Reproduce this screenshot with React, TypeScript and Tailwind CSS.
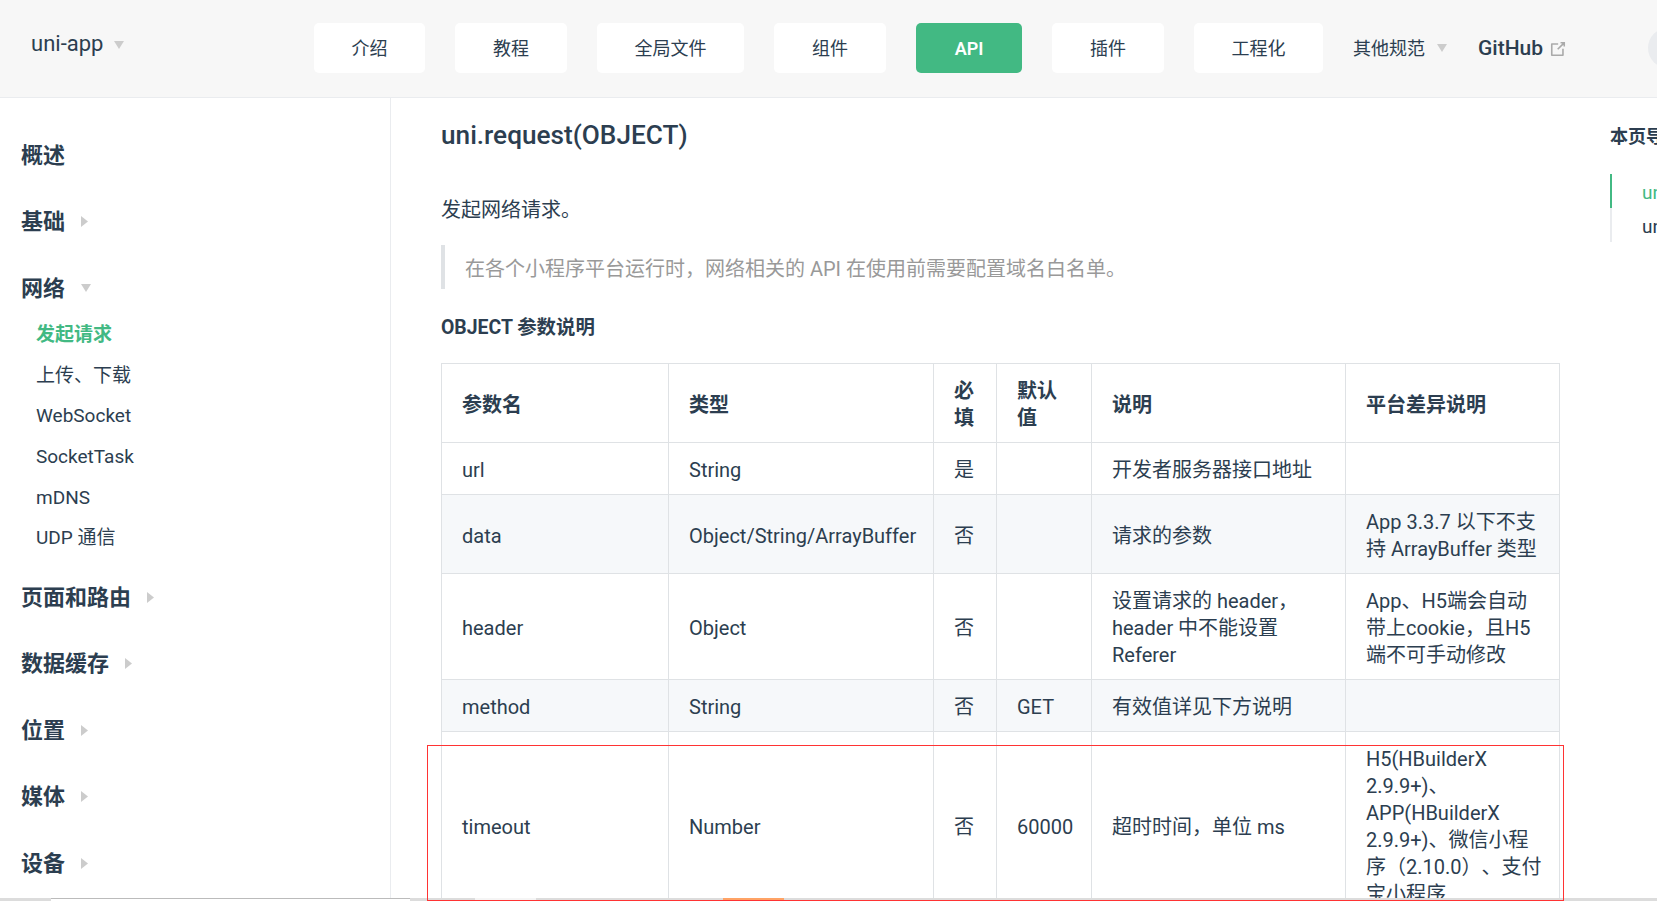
import React from 'react';

const NAV_ITEMS = [
    { label: '介绍', width: 'w-[111px]' },
    { label: '教程', width: 'w-[112px]' },
    { label: '全局文件', width: 'w-[147px]' },
    { label: '组件', width: 'w-[112px]' },
    { label: 'API', width: 'w-[106px]', active: true },
    { label: '插件', width: 'w-[112px]' },
    { label: '工程化', width: 'w-[129px]' },
];

const SUB_ITEMS = ['发起请求', '上传、下载', 'WebSocket', 'SocketTask', 'mDNS', 'UDP 通信'];

const ROWS = [
    { cells: ['url', 'String', '是', '', '开发者服务器接口地址', ''] },
    { cells: ['data', 'Object/String/ArrayBuffer', '否', '', '请求的参数', 'App 3.3.7 以下不支持 ArrayBuffer 类型'], shaded: true },
    { cells: ['header', 'Object', '否', '', '设置请求的 header，header 中不能设置 Referer', 'App、H5端会自动带上cookie，且H5端不可手动修改'] },
    { cells: ['method', 'String', '否', 'GET', '有效值详见下方说明', ''], shaded: true },
    { cells: ['timeout', 'Number', '否', '60000', '超时时间，单位 ms', 'H5(HBuilderX 2.9.9+)、APP(HBuilderX 2.9.9+)、微信小程序（2.10.0）、支付宝小程序'], tight: true },
];

function CaretDown({ className = '' }: { className?: string }) {
    return (
        <svg viewBox="0 0 10 8" className={`w-[10px] h-[8px] ${className}`}>
            <polygon points="0,0 10,0 5,8" fill="#ccc" />
        </svg>
    );
}

function CaretRight() {
    return (
        <svg viewBox="0 0 7 11" className="w-[7px] h-[11px]">
            <polygon points="0,0 7,5.5 0,11" fill="#ccc" />
        </svg>
    );
}

function OutboundIcon() {
    return (
        <svg viewBox="0 0 100 100" className="w-[20px] h-[20px]">
            <path fill="#aaa" d="M18.8,85.1h56l0,0c2.2,0,4-1.8,4-4v-32h-8v28h-48v-48h28v-8h-32l0,0c-2.2,0-4,1.8-4,4v56C14.8,83.3,16.6,85.1,18.8,85.1z" />
            <polygon fill="#aaa" points="45.7,48.7 51.3,54.3 77.2,28.5 77.2,37.2 85.2,37.2 85.2,14.9 62.8,14.9 62.8,22.9 71.5,22.9" />
        </svg>
    );
}

function SidebarHeading({ label, caret }: { label: string; caret?: 'right' | 'down' }) {
    return (
        <div className="h-[66.6px] flex items-center gap-[16px] pl-[21px] text-[22px] font-bold">
            <span>{label}</span>
            {caret === 'right' && <CaretRight />}
            {caret === 'down' && <CaretDown />}
        </div>
    );
}

function Sidebar() {
    return (
        <aside className="w-[391px] shrink-0 border-r border-[#eaecef] pt-[24px]">
            <SidebarHeading label="概述" />
            <SidebarHeading label="基础" caret="right" />
            <SidebarHeading label="网络" caret="down" />
            <ul className="-mt-[7px] mb-[5px] pl-[36px]">
                {SUB_ITEMS.map((item, i) => (
                    <li key={item} className={`h-[40.7px] flex items-center text-[19px] ${i === 0 ? 'font-bold text-[#42b983]' : ''}`}>{item}</li>
                ))}
            </ul>
            <SidebarHeading label="页面和路由" caret="right" />
            <SidebarHeading label="数据缓存" caret="right" />
            <SidebarHeading label="位置" caret="right" />
            <SidebarHeading label="媒体" caret="right" />
            <SidebarHeading label="设备" caret="right" />
        </aside>
    );
}

function ParamTable() {
    return (
        <table className="mt-[22px] w-[1118px] table-fixed border-collapse text-[20px] leading-[27px]">
            <colgroup>
                <col className="w-[227px]" />
                <col className="w-[265px]" />
                <col className="w-[63px]" />
                <col className="w-[95px]" />
                <col className="w-[254px]" />
                <col className="w-[214px]" />
            </colgroup>
            <thead>
                <tr>
                    {['参数名', '类型', '必填', '默认值', '说明', '平台差异说明'].map((head) => (
                        <th key={head} className="border border-[#dfe2e5] px-5 pt-[14px] pb-[10px] text-left font-bold">{head}</th>
                    ))}
                </tr>
            </thead>
            <tbody>
                {ROWS.map((row) => (
                    <tr key={row.cells[0]} className={row.shaded ? 'bg-[#f6f8fa]' : ''}>
                        {row.cells.map((cell, i) => (
                            <td key={i} className={`border border-[#dfe2e5] pl-5 pt-[14px] pb-[10px] ${row.tight && i === 5 ? 'pr-[14px]' : 'pr-5'}`}>{cell}</td>
                        ))}
                    </tr>
                ))}
            </tbody>
        </table>
    );
}

export default function App() {
    return (
        <div className="relative w-[1657px] h-[901px] overflow-hidden flex flex-col bg-white text-[#2c3e50] [text-spacing-trim:space-all] font-['Roboto','Noto_Sans_CJK_SC',sans-serif]">
            {/* Top nav */}
            <header className="h-[98px] shrink-0 flex items-center pb-px bg-[#f7f7f7] border-b border-[#eaecef] overflow-hidden">
                <div className="w-[314px] shrink-0 flex items-center gap-[11px] pl-[31px] -mt-[10px] text-[22px]">
                    <span>uni-app</span>
                    <CaretDown className="translate-y-[2px]" />
                </div>
                <nav className="flex items-center gap-[30px] shrink-0">
                    {NAV_ITEMS.map((item) => (
                        <a key={item.label} className={`h-[50px] flex items-center justify-center rounded-[5px] text-[18px] ${item.width} ${item.active ? 'bg-[#42b983] text-white font-semibold' : 'bg-white'}`}>{item.label}</a>
                    ))}
                </nav>
                <div className="ml-[30px] flex items-center gap-[12px] shrink-0 text-[18px]">
                    <span>其他规范</span>
                    <CaretDown />
                </div>
                <div className="ml-[31px] pt-px flex items-center gap-[5px] shrink-0 text-[21px] font-medium">
                    <span>GitHub</span>
                    <OutboundIcon />
                </div>
                <div className="ml-[80px] w-[40px] h-[40px] shrink-0 rounded-full bg-[#eaecef]" />
            </header>

            <div className="flex-1 flex min-h-0 overflow-hidden">
                <Sidebar />

                <main className="w-[1169px] shrink-0 pl-[50px]">
                    <h2 className="mt-[17px] text-[26.2px] leading-[40px] font-medium">uni.request(OBJECT)</h2>
                    <p className="mt-[42px] text-[20px] leading-[27px]">发起网络请求。</p>
                    <blockquote className="mt-[21px] h-[44px] flex items-center border-l-4 border-[#dfe2e5] pl-5 pt-1 text-[20px] text-[#999]">
                        在各个小程序平台运行时，网络相关的 API 在使用前需要配置域名白名单。
                    </blockquote>
                    <h4 className="mt-[25px] text-[19.4px] leading-[27px] font-bold">OBJECT 参数说明</h4>
                    <ParamTable />
                </main>

                {/* Page outline, runs off the right edge */}
                <div className="ml-[50px] w-[47px] shrink-0 overflow-hidden whitespace-nowrap">
                    <div className="mt-[24px] text-[18px] leading-[30px] font-bold">本页导览</div>
                    <div className="mt-[22px] h-[34px] flex items-center border-l-2 border-[#42b983] pl-[30px] pt-1 text-[19px] text-[#42b983]">uni.request(OBJECT)</div>
                    <div className="h-[34px] flex items-center border-l-2 border-[#eaecef] pl-[30px] pt-1 text-[19px]">uni.configMTU(OBJECT)</div>
                </div>
            </div>

            {/* Strip of the window below, cut off by the screenshot */}
            <div className="h-[3px] shrink-0 flex bg-[#dcdcdc]">
                <div className="ml-[51px] w-[359px] bg-white border-t border-[#bbb]" />
                <div className="ml-[65px] w-[61px] bg-[#f5f5f5]" />
                <div className="ml-[187px] w-[61px] bg-[#ffa366]" />
            </div>

            {/* Red annotation box */}
            <div className="absolute left-[427px] top-[745px] w-[1137px] h-[156px] border border-[#f33] pointer-events-none" />
        </div>
    );
}
